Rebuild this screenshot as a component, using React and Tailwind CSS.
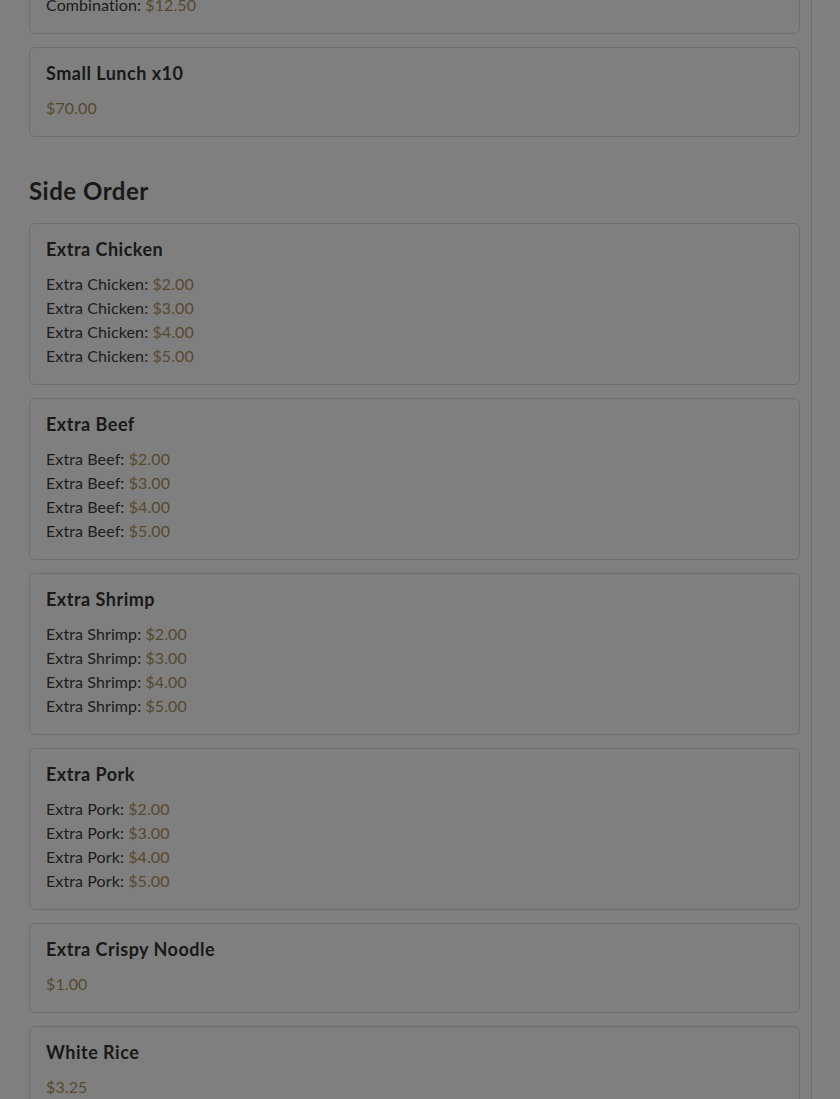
import React from 'react';

const sideOrders = [
  { name: 'Extra Chicken', options: [2, 3, 4, 5] },
  { name: 'Extra Beef', options: [2, 3, 4, 5] },
  { name: 'Extra Shrimp', options: [2, 3, 4, 5] },
  { name: 'Extra Pork', options: [2, 3, 4, 5] },
  { name: 'Extra Crispy Noodle', price: 1 },
  { name: 'White Rice', price: 3.25 },
];

const money = (n) => '$' + n.toFixed(2);

const MenuCard = ({ name, options, price, label }) => (
  <div className="border border-[#dcdcdc] rounded-md bg-white px-4 pt-[14px] pb-4">
    <h5 className="text-[18px] leading-[22px] font-bold tracking-[0.5px] text-[#333]">{name}</h5>
    <div className="mt-[12px] text-[16px] leading-6 tracking-[0.1px]">
      {options ? (
        options.map((p, i) => (
          <div key={i} className="text-[#3a3a3a]">
            {(label || name)}: <span className="text-[#b0925a]">{money(p)}</span>
          </div>
        ))
      ) : (
        <div className="text-[#b0925a]">{money(price)}</div>
      )}
    </div>
  </div>
);

export default function App() {
  return (
    <div className="relative min-h-screen bg-white overflow-hidden" style={{ fontFamily: '"Lato", "Noto Sans", sans-serif' }}>
      <div className="w-[812px] border-r border-[#dcdcdc] min-h-screen pl-[29px] pr-[11px]">
        <div className="flex flex-col gap-[13px] mt-[-80px]">
          <MenuCard name="Lunch Combo" label="Combination" options={[10.5, 12.5]} />
          <MenuCard name="Small Lunch x10" price={70} />
        </div>

        <h2 className="mt-[38px] mb-4 text-[24px] leading-8 font-bold tracking-[0.5px] text-[#333]">Side Order</h2>
        <div className="flex flex-col gap-[13px] pb-10">
          {sideOrders.map((item) => (
            <MenuCard key={item.name} {...item} />
          ))}
        </div>
      </div>

      <div className="fixed inset-0 bg-black/50" />
    </div>
  );
}
